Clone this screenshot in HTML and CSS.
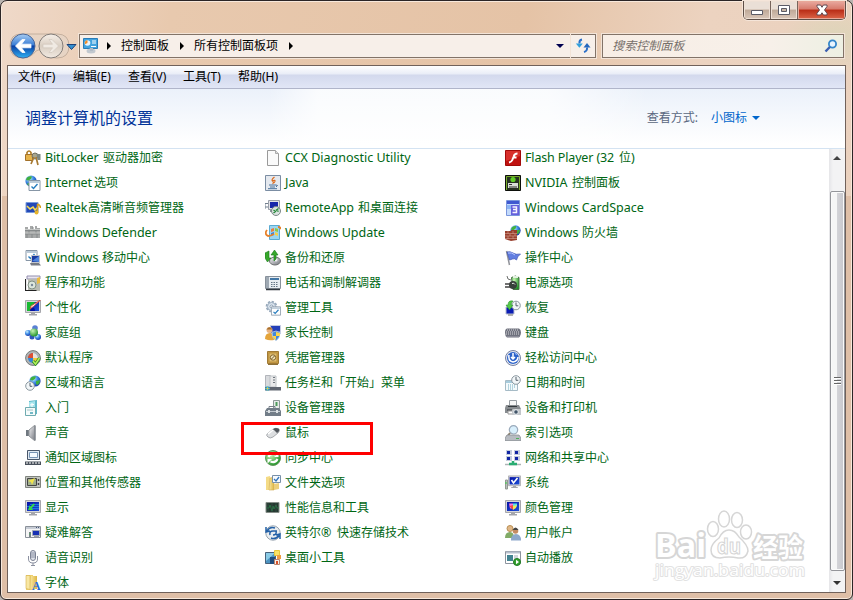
FILE: index.html
```
<!DOCTYPE html>
<html lang="zh-CN">
<head>
	<meta charset="utf-8">
	<meta name="viewport" content="width=device-width, initial-scale=1.0">
	<title>所有控制面板项</title>
	<link rel="stylesheet" href="styles.css">
</head>
<body>
<svg class="defs" width="0" height="0">
	<defs>
		<linearGradient id="blue" x1="0" y1="0" x2="0" y2="1"><stop offset="0" stop-color="#a9cdf2"/><stop offset=".45" stop-color="#3c7fd6"/><stop offset=".5" stop-color="#0a3fa4"/><stop offset="1" stop-color="#2fb2f4"/></linearGradient>
		<linearGradient id="pale" x1="0" y1="0" x2="0" y2="1"><stop offset="0" stop-color="#f6efe8"/><stop offset=".5" stop-color="#d9cec2"/><stop offset="1" stop-color="#f1e9e1"/></linearGradient>
		<linearGradient id="metal" x1="0" y1="0" x2="1" y2="1"><stop offset="0" stop-color="#f4f4f6"/><stop offset="1" stop-color="#74777f"/></linearGradient>
		<linearGradient id="folder" x1="0" y1="0" x2="1" y2="0"><stop offset="0" stop-color="#fbe9a2"/><stop offset="1" stop-color="#dcb544"/></linearGradient>
		<linearGradient id="screen" x1="0" y1="0" x2="1" y2="1"><stop offset="0" stop-color="#0510a4"/><stop offset="1" stop-color="#1c50d8"/></linearGradient>
		<radialGradient id="globe" cx=".35" cy=".3" r=".75"><stop offset="0" stop-color="#c9f1ff"/><stop offset=".5" stop-color="#3e8be5"/><stop offset="1" stop-color="#1434a4"/></radialGradient>
		<radialGradient id="green" cx=".35" cy=".3" r=".75"><stop offset="0" stop-color="#c8f5b4"/><stop offset="1" stop-color="#1d9125"/></radialGradient>
		<symbol id="monitor" viewBox="0 0 16 16"><path d="M.5 .5h15v12H.5z" fill="#d6d6da" stroke="#a6a7ac"/><path d="M2 2h12v9H2z" fill="url(#screen)"/><path d="M6 13h4v1h2v1.500H4V14h2z" fill="#a4a5ab"/></symbol>
		<symbol id="clock" viewBox="0 0 10 10"><circle cx="5" cy="5" r="4.300" fill="#f2f6f8" stroke="#8a979f"/><path d="M5 2v3.300h2.300" fill="none" stroke="#54616b"/></symbol>
		<symbol id="page" viewBox="0 0 12 11"><path d="M.5.5h11v10H.5z" fill="#fff" stroke="#8796a6"/><path d="M1 2h10" stroke="#bccbd8" stroke-width="2"/><path d="M3 6.500l2 2 4-4.500" fill="none" stroke="#277dbe" stroke-width="1.400"/></symbol>
		<symbol id="earth" viewBox="0 0 12 12"><circle cx="6" cy="6" r="5.600" fill="url(#globe)"/><path d="M2 2.600Q5 .5 7 1.400L6 4 3.600 5.600 1 5zM7 6l4-1q.3 3-2.400 5L7 9zM3 8l2 1-1 2-2-2z" fill="#41b13d"/></symbol>
	</defs>
</svg>
<div class="window">
	<div class="caption">
		<div class="buttons">
			<span class="btn min"><svg width="14" height="14"><path d="M1.500 7.500h11v4h-11z" fill="#fff" stroke="#5b5b66"/></svg></span>
			<span class="btn max"><svg width="14" height="14"><path d="M1.500 2.500h11v9h-11z" fill="#fff" stroke="#5b5b66"/><path d="M4.500 5.500h5v3h-5z" fill="#c9b6a5" stroke="#5b5b66"/></svg></span>
			<span class="btn close"><svg width="14" height="14"><path d="M2 2h3.600L7 4.300 8.400 2H12v1.500L9.500 7l2.500 3.300V12H8.400L7 9.800 5.600 12H2v-1.700L4.500 7 2 3.500z" fill="#fff" stroke="#604b53"/></svg></span>
		</div>
	</div>
	<div class="navbar">
		<svg class="travel" width="70" height="28">
			<path d="M13 2h36q12 0 12 12t-12 12q-8 0-13-7-4-3-8 0-5 7-13 7Q2 26 2 14T13 2z" fill="#e7d4c4" stroke="#c5b09e"/>
			<circle cx="15" cy="14" r="12" fill="url(#blue)" stroke="#4b6798"/>
			<path d="M7.500 14l6.500-6.500h3L13.500 12.200H23v3.600h-9.500l3.500 4.700h-3z" fill="#fff" stroke="#fff" stroke-width=".8"/>
			<circle cx="43" cy="14" r="12" fill="url(#pale)" stroke="#827c78"/>
			<path d="M50.500 14L44 7.500h-3l3.500 4.700H35v3.600h9.500L41 20.500h3z" fill="#f0eae3" stroke="#cfc5ba" stroke-width=".6"/>
			<path d="M59 12.500h9l-4.500 5z" fill="#348fd0" stroke="#1d4179"/>
		</svg>
		<div class="address">
			<svg class="cpl" width="17" height="17"><path d="M1.500 1.500h14v10h-14z" fill="#43a3de" stroke="#297bb7"/><circle cx="5.500" cy="6" r="2.800" fill="#e7f5ff"/><path d="M5.500 6V3.200A2.800 2.800 0 0 0 3 7.200z" fill="#f18b27"/><path d="M10 4h4M10 6h4M9 9.500h5" stroke="#fff"/><ellipse cx="9" cy="14" rx="4.500" ry="2.500" fill="#c1c8cf"/><path d="M8 11h3v3H8z" fill="#b1bbc5"/></svg>
			<i class="right"></i><span>控制面板</span><i class="right"></i><span>所有控制面板项</span><i class="right"></i>
			<i class="down"></i>
		</div>
		<div class="refresh">
			<svg width="16" height="16"><path d="M7 1.500Q4 2 4.500 5.500M12 9.500Q12.500 13 9 14" fill="none" stroke="#2b70c9" stroke-width="2"/><path d="M.8 5.500h7L4.400 9.800z" fill="#32a0dc"/><path d="M8.500 9.500h7L12 5z" fill="#2567bd"/></svg>
		</div>
		<div class="search">
			<span>搜索控制面板</span>
			<svg width="14" height="14"><circle cx="8.500" cy="5" r="3.600" fill="#e8f5ff" stroke="#3386ca" stroke-width="1.800"/><path d="M5.800 8L1.500 12.500" stroke="#3b5fb0" stroke-width="2.400"/></svg>
		</div>
	</div>
	<div class="client">
		<div class="menu"><span>文件(F)</span><span>编辑(E)</span><span>查看(V)</span><span>工具(T)</span><span>帮助(H)</span></div>
		<div class="header">
			<h1>调整计算机的设置</h1>
			<div class="view">查看方式: <a>小图标</a><i></i></div>
		</div>
		<div class="body">
			<div class="items">
				<a><svg viewBox="0 0 16 16"><path d="M2 4V2.500Q4-.5 6 2.500V6" fill="none" stroke="#ad7c26" stroke-width="1.600"/><path d="M.5 4.500h7v6h-7z" fill="#e6b34a" stroke="#a2712a"/><circle cx="10" cy="6" r="3" fill="#a8a68e" stroke="#716f60"/><path d="M9 7l-3 7M11 7l2 8" stroke="#a77b34" stroke-width="1.700"/><path d="M11.500 4h4v6h-3z" fill="#7c8680"/></svg><span class="en w58">BitLocker </span>驱动器加密</a>
				<a><svg viewBox="0 0 16 16"><path d="M2.500.5h8l3 3v12h-11z" fill="#fafafa" stroke="#9a9a9a"/><path d="M10.500.5v3h3" fill="#ddd" stroke="#aaa"/></svg><span class="en">CCX Diagnostic Utility</span></a>
				<a><svg viewBox="0 0 16 16"><path d="M.5.5h15v15H.5z" fill="#c01210" stroke="#a20a09"/><path d="M1 1h14v5L1 11z" fill="#d8302c"/><path d="M12.500 3.500q-3 0-3.800 3L7.300 10Q6.500 12 4 12.500M8 7.500h3.500" fill="none" stroke="#fff" stroke-width="2"/></svg><span class="en w94">Flash Player (32 </span>位<span class="en">)</span></a>

				<a><svg viewBox="0 0 16 16"><use href="#earth" width="12" height="12"/><use href="#page" x="3" y="5" width="13" height="11"/></svg><span class="en w49">Internet </span>选项</a>
				<a><svg viewBox="0 0 16 16"><path d="M.5.5h15v15H.5z" fill="#e5e9ef" stroke="#7b8da3"/><path d="M9.500 2q-4 3-1.500 4.500Q9 8 7.500 9M7 6q5-2 2 2" fill="none" stroke="#dc6c1f" stroke-width="1.200"/><path d="M4 10h7M5 12h5M3 13.700h9M11 10q3 0 0 2" fill="none" stroke="#48709a"/></svg><span class="en">Java</span></a>
				<a><svg viewBox="0 0 16 16"><path d="M.5.5h15v15H.5z" fill="#263221" stroke="#0c0f0a"/><path d="M1.500 15V1.500H14.500V15" fill="none" stroke="#76a92b"/><circle cx="8" cy="4.500" r="2.600" fill="#60ce25"/><path d="M3 8h10v5H3z" fill="#d9dfd6"/><path d="M4 9.500h3M4 12h8" stroke="#333"/></svg><span class="en w47">NVIDIA </span>控制面板</a>

				<a><svg viewBox="0 0 16 16"><path d="M1 2.500h12v10H1z" fill="#2349b7" stroke="#7a9cdd"/><path d="M2 6l3 3 3-2 2 3 3-3" fill="none" stroke="#f7db58" stroke-width="1.600"/><path d="M12.500 4v8M12.500 4q3 1 3 4" stroke="#d69e1c" stroke-width="1.500" fill="none"/><circle cx="11.500" cy="12.500" r="2" fill="#e7b52c"/></svg><span class="en w43">Realtek</span>高清晰音频管理器</a>
				<a><svg viewBox="0 0 16 16"><path d="M0 3.500h5M0 3v6M0 7h4" stroke="#73808f"/><path d="M3.500.5h11v9h-11z" fill="#e3e3e8" stroke="#999fa9"/><path d="M5 2h8v6H5z" fill="#1726aa"/><path d="M5 10h4v2H5z" fill="#8b929b"/><circle cx="11" cy="11" r="4.500" fill="#dbe3e1" stroke="#7c8788"/><path d="M8.500 10l2 1.500-2 1.500M13.500 8.500l-2 1.500 2 1.500" fill="none" stroke="#228736" stroke-width="1.300"/></svg><span class="en w73">RemoteApp </span>和桌面连接</a>
				<a><svg viewBox="0 0 16 16"><path d="M1.500.5h13v15h-13z" fill="#c3dafb" stroke="#7a96dc"/><path d="M2 1h12v3H2z" fill="#3f58d0"/><path d="M2 5h5v4H2z" fill="#8db5f4"/><path d="M6 5h8v10H6z" fill="#6560dc"/><path d="M7.500 7h4v2.500H8M11.500 9.500v3h-4" fill="none" stroke="#f5f4ff" stroke-width="1.500"/></svg><span class="en">Windows CardSpace</span></a>

				<a><svg viewBox="0 0 16 16"><path d="M0 2h3v2h2V1h3v3h2V1h2v2h3v10H0z" fill="#a6a8a8"/><path d="M0 5.500h15M0 9h15M4 5v4M8 2v4M11 6v3M2 9v4M7 9v4M12 9v4" stroke="#85898a"/><path d="M0 4.500h15M0 8h15" stroke="#d6d7d6" stroke-width=".7"/></svg><span class="en">Windows Defender</span></a>
				<a><svg viewBox="0 0 16 16"><path d="M4.500.5h10v14h-10z" fill="#9bd6f2" stroke="#5cabd2"/><path d="M6 4l3-1v3L6 7z" fill="#ec7d3b"/><path d="M10 3l3 1v3l-3-1z" fill="#8cc84b"/><path d="M6 8l3-1v3l-3 1z" fill="#3e81dc"/><path d="M10 7l3 1v3l-3-1z" fill="#f4d24c"/><path d="M13 2q3 0 2 2M2 5Q-1 9 3 11q3 0 6-2" fill="none" stroke="#e7822b" stroke-width="1.800"/></svg><span class="en">Windows Update</span></a>
				<a><svg viewBox="0 0 16 16"><use href="#earth" x="5" y="0" width="11" height="11"/><path d="M0 6h6v-1h6v10l-6 1-6-2z" fill="#99402e"/><path d="M0 8.500h12M0 11h12M0 13.500h12M3 6v3M8 6v3M5 9v2M10 9v2M3 11v3M8 11v3" stroke="#cf9484" stroke-width=".7"/></svg><span class="en w57">Windows </span>防火墙</a>

				<a><svg viewBox="0 0 16 16"><use href="#page" width="13" height="11"/><path d="M6.500 5.500h8v7h-8z" fill="#193a9f" stroke="#c2c5cb"/><path d="M7 11l7-5v6z" fill="#4d83dd"/><path d="M5 13h9l2 2.500H6z" fill="#777b84"/></svg><span class="en w57">Windows </span>移动中心</a>
				<a><svg viewBox="0 0 16 16"><ellipse cx="10" cy="11" rx="5.500" ry="4" fill="url(#metal)" stroke="#6c6e70"/><circle cx="11" cy="10" r="1.500" fill="#eee"/><path d="M4 1v7h2l-3.500 4L0 8V3zM9 11V5H6l3.500-5L13 5h-2v4z" fill="#38a82c" stroke="#15771a" stroke-width=".6"/></svg>备份和还原</a>
				<a><svg viewBox="0 0 16 16"><path d="M1.500 1l3 14" stroke="#909299" stroke-width="1.500"/><path d="M2 2q3-1 6 1t7.500 1q-3 2-4 6-2-2-4-1l-3 1z" fill="#617ee1" stroke="#3b52b4" stroke-width=".7"/><path d="M3 3q4-1 7 2" stroke="#b4c4ff" fill="none"/></svg>操作中心</a>

				<a><svg viewBox="0 0 16 16"><path d="M2 1h13v3H2z" fill="#e8e6f0" stroke="#938eae"/><path d="M3 4h12v12H3z" fill="#b9bbb2"/><path d="M.5 4v11.500h11" fill="none" stroke="#222" stroke-width="1.200"/><circle cx="7" cy="10" r="4" fill="#dce6dd" stroke="#829185"/><circle cx="7" cy="10" r="1.200" fill="#789"/><path d="M12 3l3-1v6l-3 1z" fill="#e9bb42"/></svg>程序和功能</a>
				<a><svg viewBox="0 0 16 16"><path d="M.5 1.500h15v12H.5z" fill="#e8edf1" stroke="#88919b"/><path d="M1 2h3v11H1z" fill="#9fa9b3"/><path d="M5 3h9v2H5z" fill="#4277a6"/><path d="M6 7.500h7M6 9.500h7M6 11.500h7" stroke="#647483" stroke-dasharray="1.500 1"/><path d="M1 14.500h14" stroke="#31373e" stroke-width="1.500"/></svg>电话和调制解调器</a>
				<a><svg viewBox="0 0 16 16"><path d="M6.500 2.500q4-3 7.500 0v12H8z" fill="url(#green)" stroke="#477244"/><path d="M8 2h5" stroke="#e5f2e2" stroke-width="2"/><path d="M2 1q0 4 4 4" fill="none" stroke="#6f726f"/><circle cx="8" cy="10" r="4" fill="#37403a"/><path d="M0 9h5M0 12h5" stroke="#444" stroke-width="1.300"/><path d="M7 8.500q2-1 3 1" stroke="#e8eee7" fill="none"/></svg>电源选项</a>

				<a><svg viewBox="0 0 16 16"><use href="#monitor" width="16" height="16"/><path d="M2 2h8L6 11H2z" fill="#17b832"/><path d="M6 7q4 0 4 4H5z" fill="#0510a4"/><path d="M15.500 0L9 6 5 9l1-3z" fill="#fff" stroke="#e33d2c" stroke-width=".8"/></svg>个性化</a>
				<a><svg viewBox="0 0 16 16"><circle cx="6.500" cy="6.500" r="4.800" fill="#dce5ee" stroke="#97a8ba" stroke-width="2" stroke-dasharray="2.200 1.500"/><circle cx="6.500" cy="6.500" r="4" fill="#dce5ee" stroke="#9fb0c2"/><circle cx="6.500" cy="6.500" r="1.500" fill="#fff" stroke="#8ba0b5"/><use href="#page" x="6" y="6" width="10" height="10"/></svg>管理工具</a>
				<a><svg viewBox="0 0 16 16"><path d="M1 7h8v7H1z" fill="#0a1cb4" stroke="#b9bfcf"/><path d="M3 15h5" stroke="#999" stroke-width="1.500"/><use href="#clock" x="6" y="0" width="10" height="11"/><path d="M8 1Q3 0 3 5H1l3.500 5L8 5H6q0-2 2-4z" fill="#54c849" stroke="#238924" stroke-width=".5"/></svg>恢复</a>

				<a><svg viewBox="0 0 16 16"><circle cx="10" cy="3" r="2.800" fill="#5a80d4"/><circle cx="3" cy="8" r="3" fill="url(#globe)"/><circle cx="13" cy="12" r="3" fill="url(#globe)"/><circle cx="7" cy="12" r="2.500" fill="#3256b9"/><circle cx="9" cy="7.500" r="4" fill="url(#green)"/></svg>家庭组</a>
				<a><svg viewBox="0 0 16 16"><path d="M5.500.5h10v8h-10z" fill="#2440b8" stroke="#c5cce0"/><circle cx="4.500" cy="5" r="3" fill="#e7b483"/><path d="M1.500 4.500Q4.500 0 7.500 4.500z" fill="#a56f2e"/><path d="M0 14q0-6 5-6 4 0 4 7-5 1-9-1z" fill="#e4a43b"/><path d="M11 6q2 1 4 1 1 5-4 9-5-4-4-9 2 0 4-1z" fill="#4488d8" stroke="#dae3ec" stroke-width=".7"/><path d="M11 7v4h4q0-2-.3-3zM11 11v4q-3-2-3.500-4z" fill="#ffd54a"/></svg>家长控制</a>
				<a><svg viewBox="0 0 16 16"><path d="M2 3.500h12q2 1 2 4T14 12.500H2Q0 11 0 7.500T2 3.500z" fill="#70737f"/><path d="M2 5h12M1 7h14M1 9h14" stroke="#d7d8dc" stroke-width="1.200" stroke-dasharray="1 1"/><path d="M1 11.500h14" stroke="#8a8b98" fill="none"/></svg>键盘</a>

				<a><svg viewBox="0 0 16 16"><circle cx="8" cy="8" r="7.400" fill="#b1b5b5" stroke="#777b7c"/><circle cx="8" cy="8" r="5" fill="#3487d5"/><path d="M8 3A5 5 0 0 0 3 8H8z" fill="#df4f32"/><path d="M8 3A5 5 0 0 1 13 8H8z" fill="#e9e4dc"/><path d="M8 8h5A5 5 0 0 1 8 13z" fill="#f2c53d"/><path d="M8 11l2.500 3L14.500 8" fill="none" stroke="#2c8d24" stroke-width="3"/><path d="M8 11l2.500 3L14.500 8" fill="none" stroke="#b4f15b" stroke-width="1.500"/></svg>默认程序</a>
				<a><svg viewBox="0 0 16 16"><path d="M2.500 1.500h11v12h-11z" fill="#c89b45" stroke="#a07a36"/><path d="M4 3h8v9H4z" fill="#e1be71" stroke="#b78f3f"/><circle cx="8" cy="7.500" r="2.700" fill="#f2e5bd" stroke="#80632c"/><path d="M6.500 9L9.500 6" stroke="#705521"/><path d="M3 14.500h10" stroke="#8d7038"/></svg>凭据管理器</a>
				<a><svg viewBox="0 0 16 16"><circle cx="8" cy="8" r="7.500" fill="#e4e7f0" stroke="#7581a2"/><circle cx="8" cy="8" r="6" fill="#2c63ca"/><path d="M4 5q-1 6 4 7 5-1 5-5M8 3v6M6 7l2 2 2-2" fill="none" stroke="#fff" stroke-width="1.500"/><path d="M10 3.500l2 1" stroke="#a5c3ff"/></svg>轻松访问中心</a>

				<a><svg viewBox="0 0 16 16"><use href="#earth" x="4" width="12" height="12"/><use href="#clock" y="6" width="10" height="10"/></svg>区域和语言</a>
				<a><svg viewBox="0 0 16 16"><path d="M.5.5h5v12h-5z" fill="#d8dadd" stroke="#b2b5bb"/><path d="M5 1h6v11H5z" fill="#e9e9ea" stroke="#bcc1c5"/><path d="M8 2.500h2M8 5h2M8 7.500h2" stroke="#6f767e"/><path d="M0 12h16v3.500H0z" fill="#606671"/><circle cx="2.500" cy="13.500" r="2.300" fill="#26a0d4"/><path d="M2.500 11.500v4M.5 13.500h4" stroke="#e7ce50" stroke-width=".7"/></svg>任务栏和「开始」菜单</a>
				<a><svg viewBox="0 0 16 16"><path d="M.5 5.500h12v10H.5z" fill="#f4fafc" stroke="#a6bbc6"/><path d="M1 6h11v2H1z" fill="#a6cbdc"/><path d="M3 10h8M3 12h8M3 14h6" stroke="#71acc0" stroke-dasharray="1 1"/><use href="#clock" x="6" width="10" height="10"/></svg>日期和时间</a>

				<a><svg viewBox="0 0 16 16"><path d="M4 1l8-1v14l-8 1z" fill="#62b9ca"/><path d="M4 2l6-1v12l-6 1z" fill="#a5e4ec"/><path d="M5 5l4-.500M7 3v5" stroke="#fff"/><path d="M.5 7.500h10v8H.5z" fill="#f5fbfb" stroke="#6fabb0"/><path d="M2 10h6" stroke="#a4c4c6"/><path d="M5 13h3" stroke="#46a4b6" stroke-width="1.500"/></svg>入门</a>
				<a><svg viewBox="0 0 16 16"><path d="M8.500.5h6v10h-6z" fill="#e7ebe9" stroke="#8d9897"/><path d="M10.500 2h2v4h-2z" fill="#4c9a5b"/><path d="M4 9V6.500h6V9" fill="none" stroke="#777f88"/><path d="M2 8h12l2 3v5H0v-5z" fill="#727d88"/><path d="M1 11.500h14" stroke="#c2c9cf"/><path d="M3 10h2v3H3zM11 10h2v3h-2z" fill="#dce1e4"/></svg>设备管理器</a>
				<a><svg viewBox="0 0 16 16"><path d="M4.500.5h7v6h-7z" fill="#f7f7f7" stroke="#999fa4"/><path d="M1 5h13l2 4v4H0V8z" fill="#888c90"/><path d="M3 6.500h9M2 10h5" stroke="#343a3e"/><path d="M3 11h5v3H3z" fill="#fff" stroke="#999"/><path d="M8 9h8v6H7v-5z" fill="#c2c6ca"/><circle cx="11" cy="12" r="2.300" fill="#415468" stroke="#ebeff2"/></svg>设备和打印机</a>

				<a><svg viewBox="0 0 16 16"><path d="M1 5h4v6H1z" fill="#707880"/><path d="M4 5l6-5v16l-6-5z" fill="url(#metal)" stroke="#94989d"/><path d="M10 1v14" stroke="#747b82"/></svg>声音</a>
				<a><svg viewBox="0 0 16 16"><path d="M2 9l5-4q4-3 7-1 1 2-1 4l-5 4q-3 2-5 0-2-1-1-3z" fill="#dddfe1" stroke="#95999d" stroke-width=".8"/><path d="M8 4q3-2 6 0 1 2-2 4z" fill="#52575d"/><path d="M3 9l5-4" stroke="#fff" stroke-width="1.600"/></svg>鼠标</a>
				<a><svg viewBox="0 0 16 16"><circle cx="8.500" cy="4.800" r="4.200" fill="#d8effc" stroke="#9aaabb" stroke-width="1.200"/><path d="M5 8l-3 4" stroke="#8b806f" stroke-width="2"/><path d="M2 10h12l2 3v2.500H0V13z" fill="#b7bbc1" stroke="#81868d" stroke-width=".7"/><path d="M11 13.500h3" stroke="#4db25a"/></svg>索引选项</a>

				<a><svg viewBox="0 0 16 16"><path d="M2.500.5h12v9h-12z" fill="#e0e9f2" stroke="#49576a"/><path d="M4.500 2.500h8v5h-8z" fill="#f5faff" stroke="#7794b4"/><path d="M0 11.500h16v3.500H0z" fill="#48505b"/><path d="M1 13h14" stroke="#fff" stroke-dasharray="2 1"/></svg>通知区域图标</a>
				<a><svg viewBox="0 0 16 16"><circle cx="8" cy="8" r="7.500" fill="url(#green)" stroke="#60985c"/><path d="M3.500 7q2-4.500 7-2.500M12.500 9q-2 4.500-7 2.500" fill="none" stroke="#fff" stroke-width="2"/><path d="M9 7h4.500V2.500zM7 9H2.500v4.500z" fill="#fff"/></svg>同步中心</a>
				<a><svg viewBox="0 0 16 16"><path d="M1 0h6v5H1zM9 0h6v5H9zM1 6h6v5H1zM9 6h6v5H9z" fill="#c4cedd"/><path d="M2 1h3v3H2zM10 1h3v3h-3zM2 7h3v3H2zM10 7h3v3h-3z" fill="#1226a4"/><path d="M0 14.500h16" stroke="#acb5b5" stroke-width="1.500"/><path d="M8 11v3M4 14h8" stroke="#29ac72" stroke-width="2.500"/></svg>网络和共享中心</a>

				<a><svg viewBox="0 0 16 16"><path d="M.5 1.500h15v11H.5z" fill="#c1c4bf" stroke="#81857f"/><path d="M2.500 3.500h9v7h-9z" fill="#a2b08c" stroke="#444"/><path d="M3 6l7-3-3 7-1-3z" fill="#f3e54a"/><path d="M13.500 4v2M13.500 8v2" stroke="#444" stroke-width="1.500"/></svg>位置和其他传感器</a>
				<a><svg viewBox="0 0 16 16"><path d="M1 2l4-1v14H1z" fill="#f4db86"/><path d="M5 3l4-1v13H4z" fill="url(#folder)" stroke="#d0ac55" stroke-width=".6"/><path d="M9 9l5-1v6l-5 1z" fill="#eccf7c"/><path d="M7.500.5h8v7h-8z" fill="#f8fbff" stroke="#7890a8"/><path d="M9 4l2 2 3-4" fill="none" stroke="#3476bc" stroke-width="1.300"/></svg>文件夹选项</a>
				<a><svg viewBox="0 0 16 16"><path d="M.5 5h2v9h-2z" fill="#b9c0ba" stroke="#929893"/><path d="M1 7v2" stroke="#38d345"/><use href="#monitor" x="3" y="0" width="13" height="14"/><path d="M6.500 5l2 3 4-5" fill="none" stroke="#fff" stroke-width="1.600"/></svg>系统</a>

				<a><svg viewBox="0 0 16 16"><use href="#monitor" width="16" height="16"/><path d="M2 6.500h12M5 4.500h9M4 8.500h10" stroke="#1e8be7" stroke-width=".8"/><path d="M8.500 3.500L5 7V4.500L3 10h5.500L6.500 8.500l3.500-4z" fill="#35da45"/></svg>显示</a>
				<a><svg viewBox="0 0 16 16"><path d="M1 2.500h13v10H1z" fill="#253931" stroke="#868e89"/><path d="M1 8h3l1-3 2 6 1-5 1 3 2-4 1 3h2" fill="none" stroke="#2a7c46" stroke-width=".8"/><path d="M3 3v9M7 3v9M11 3v9" stroke="#36564a" stroke-width=".6"/></svg>性能信息和工具</a>
				<a><svg viewBox="0 0 16 16"><use href="#monitor" width="16" height="16"/><path d="M4 3.500h4v5H5z" fill="#ff70df"/><path d="M8 3.500h4v3H8z" fill="#59e5e6"/><path d="M4.500 6L8 5v5z" fill="#ef4c42"/><path d="M8 6l4-1-1 3-3 2z" fill="#f2e758"/></svg>颜色管理</a>

				<a><svg viewBox="0 0 16 16"><path d="M.5 1.500h15v11H.5z" fill="#f5f5f5" stroke="#8a9099"/><path d="M1 3h14" stroke="#c8cdd6" stroke-width="2"/><path d="M11 2.500h1M13 2.500h1" stroke="#475879"/><path d="M7.500 5.500h7v5h-7z" fill="#1730b3" stroke="#a2a8b7"/><path d="M4 7h2v5H4z" fill="#798187"/><path d="M4.500 9h1" stroke="#33da43"/><path d="M9 11.500h5" stroke="#999ea8"/></svg>疑难解答</a>
				<a><svg viewBox="0 0 16 16"><circle cx="8" cy="8" r="7.200" fill="#e9edf0" stroke="#97a3ae"/><path d="M2 6q3-5 8-3M5 6l-4 1V2M14 10q-3 5-8 3M11 10l4-1v5M5 10q-1-4 3-4h4M11 6q1 4-3 4" fill="none" stroke="#2461a7" stroke-width="1.500"/></svg>英特尔<span class="en w16">®</span>快速存储技术</a>
				<a><svg viewBox="0 0 16 16"><circle cx="5" cy="3.500" r="3" fill="#e0b888" stroke="#b98f55"/><path d="M0 13q0-6 5-6 4 0 4 6z" fill="#82ab67"/><circle cx="10.500" cy="6" r="2.800" fill="#c58b62"/><path d="M7.500 5q3-5 6 0z" fill="#444"/><path d="M6 15.500q0-6.500 5-6.500 5 0 5 6.500z" fill="#8da8cb"/></svg>用户帐户</a>

				<a><svg viewBox="0 0 16 16"><rect x="5.500" y=".5" width="5" height="10" rx="2.500" fill="#dfe2ea" stroke="#7c8294"/><path d="M6 3h4M6 5h4M6 7h4" stroke="#868da0"/><path d="M3.500 6v3q0 4 4.500 4t4.500-4V6M8 13v2.500M6 15.500h4" fill="none" stroke="#8b90a0"/></svg>语音识别</a>
				<a><svg viewBox="0 0 16 16"><path d="M.5 2.500h10v11H.5z" fill="#4c93c1" stroke="#47627b"/><path d="M1 3h9L1 11z" fill="#8acbe6"/><path d="M5 7h5v7H5z" fill="#1e4c7c"/><path d="M9.500.5h5v5h-5z" fill="#f8e368" stroke="#e8c93a"/><path d="M12 5h4v4h-4z" fill="#ef9c41"/><path d="M9.500 9.500h5v5h-5z" fill="#f5eee9" stroke="#b8846f"/><path d="M11 11h2v3h-2z" fill="#d9522a"/></svg>桌面小工具</a>
				<a><svg viewBox="0 0 16 16"><path d="M.5 1.500h15v12H.5z" fill="#fff" stroke="#8d949e"/><path d="M1 2.500h14" stroke="#b9c1ce" stroke-width="2"/><path d="M2 5h6v6H2z" fill="#438391"/><path d="M9 6h4M9 8h4" stroke="#a3acb8"/><circle cx="12" cy="12" r="3.500" fill="#34a02d" stroke="#1f7c22"/><path d="M11 9.700l3 2.300-3 2.300z" fill="#fff"/></svg>自动播放</a>

				<a><svg viewBox="0 0 16 16"><path d="M1 0h7v15H1z" fill="#eed06e"/><path d="M6 1h6v13H5z" fill="url(#folder)"/><path d="M1 .5h4v14l-4-1z" fill="#f8e7a3" stroke="#d3ae4c" stroke-width=".6"/><text x="7" y="15" font-size="12" font-weight="bold" font-family="Liberation Serif, serif" fill="#246bd1">A</text></svg>字体</a>
			</div>
			<div class="scrollbar">
				<i class="up"></i>
				<div class="thumb"><i></i></div>
				<i class="down"></i>
			</div>
		</div>
	</div>
	<div class="mark"></div>
	<svg class="watermark" width="160" height="76">
		<g fill="#fff" stroke="#d6d6d6" stroke-width="4" stroke-linejoin="round" paint-order="stroke">
			<text x="3" y="49" font-size="32" font-weight="bold" textLength="51" lengthAdjust="spacingAndGlyphs">Bai</text>
			<text x="101" y="49" font-size="26" font-weight="bold" textLength="50" lengthAdjust="spacingAndGlyphs">经验</text>
			<text x="3" y="68" font-size="17" stroke-width="2" stroke="#e2e2e2" textLength="150" lengthAdjust="spacingAndGlyphs">jingyan.baidu.com</text>
		</g>
		<g fill="#fff" stroke="#d6d6d6" stroke-width="1.500">
			<ellipse cx="61" cy="21" rx="5.500" ry="7.500"/><ellipse cx="72" cy="11" rx="5.500" ry="8"/><ellipse cx="85" cy="12" rx="5.500" ry="7.500"/><ellipse cx="94" cy="24" rx="5.500" ry="7"/>
			<path d="M77 22q6 0 10 7 9 8 9 14-2 8-10 7-9-2-18 0-9 0-9-8 0-6 8-12 4-8 10-8z"/>
			<text x="65" y="46" font-size="21" font-weight="bold" stroke-width="1.200" textLength="24" lengthAdjust="spacingAndGlyphs">du</text>
		</g>
	</svg>
</div>
</body>
</html>
```

FILE: styles.css
```
* {
	box-sizing: border-box;
}
body {
	margin: 0;
	width: 853px;
	height: 600px;
	overflow: hidden;
	background: #b9b4b0;
	font: 12px/16px "Noto Sans", "Noto Sans CJK SC", sans-serif;
	color: #000;
}
i {
	display: block;
	flex: none;
}
.defs {
	position: absolute;
}
.window {
	position: relative;
	display: flex;
	flex-direction: column;
	width: 853px;
	height: 600px;
	padding: 0 6px 6px;
	border: 1px solid #2b2526;
	border-radius: 7px 7px 6px 6px;
	box-shadow: inset 0 0 0 1px #f8e9dc;
	background:
		radial-gradient(ellipse 55px 35px at 835px 38px, #dcd5b9, transparent),
		linear-gradient(100deg, #efd9c9 0, #e8c9ae 170px, #e5c3a6 520px, #ecd3c0 700px, #ead1be 100%) 0 0 / 100% 195px no-repeat,
		#dfbfa7;
}

/* caption buttons */
.caption {
	display: flex;
	justify-content: flex-end;
	height: 31px;
}
.buttons {
	display: flex;
	width: 103px;
	height: 19px;
	border: 1px solid #5f4f47;
	border-top: 0;
	border-radius: 0 0 5px 5px;
	overflow: hidden;
	box-shadow: 0 0 0 1px #f5e5d9;
}
.btn {
	display: flex;
	align-items: center;
	justify-content: center;
	width: 27px;
	border-right: 1px solid #77655c;
	background: linear-gradient(#eadfd6 0 45%, #bfa998 50%, #dac7b9);
	box-shadow: inset 0 0 0 1px #eee0d5;
}
.close {
	flex: 1;
	border: 0;
	background: linear-gradient(#e9aaa0 0, #d77b6c 45%, #b92c16 50%, #dc6548);
	box-shadow: inset 0 0 0 1px #e8a898;
}

/* address bar */
.navbar {
	display: flex;
	align-items: flex-start;
	height: 33px;
	padding: 2px 2px 0 1px;
}
.travel {
	flex: none;
	margin-top: -2px;
}
.address, .refresh, .search {
	display: flex;
	align-items: center;
	height: 24px;
	border: 1px solid #827368;
	box-shadow: 0 0 0 1px #f3e4d8;
	background: #f7efe9;
}
.address {
	width: 493px;
	margin-left: 1px;
	padding: 0 6px 1px 2px;
}
.address .right {
	margin: 0 9px 0 11px;
	border: solid transparent;
	border-width: 4px 0 4px 4px;
	border-left-color: #000;
}
.address span + .right + span {
	margin-left: 1px;
}
.address .cpl {
	flex: none;
}
.address .cpl + .right {
	margin-left: 8px;
	margin-right: 10px;
}
.down {
	border: solid transparent;
	border-width: 4px 4px 0;
	border-top-color: #000050;
}
.address .down {
	margin-left: auto;
}
.refresh {
	width: 25px;
	border-left: 0;
	justify-content: center;
}
.search {
	width: 242px;
	margin-left: 6px;
	padding: 0 5px 0 9px;
	justify-content: space-between;
	color: #77706b;
	font-style: italic;
	background: linear-gradient(90deg, #f8eee6, #f7f0e9 70%, #edf0e3);
}

/* client area */
.client {
	flex: 1;
	display: flex;
	flex-direction: column;
	min-height: 0;
	border: 1px solid #70615a;
	background: #fff;
}
.menu {
	display: grid;
	grid-template-columns: repeat(5, 55px);
	height: 23px;
	padding: 3px 10px;
	border-bottom: 1px solid #b0b5ca;
	background: linear-gradient(#fff, #e9edf7 8px, #d3d9ed 9px, #e1e6f6);
}
.header {
	display: flex;
	justify-content: space-between;
	align-items: center;
	height: 60px;
	padding: 0 85px 2px 17px;
	border-bottom: 1px solid #d4e3f2;
	background:
		linear-gradient(90deg, transparent 260px, #fffb 310px 540px, transparent 640px),
		linear-gradient(#ebf1fa, #fff 55px);
}
h1 {
	margin: 0;
	font-size: 16px;
	line-height: 20px;
	font-weight: normal;
	color: #039;
}
.view {
	display: flex;
	align-items: center;
	color: #5a6780;
}
.view a {
	margin: 0 5px 0 13px;
	color: #06c;
}
.view i {
	border: solid transparent;
	border-width: 4px 4px 0;
	border-top-color: #06c;
}
.body {
	display: flex;
	flex: 1;
	min-height: 0;
}
.items {
	flex: 1;
	display: grid;
	grid-template-columns: 240px 240px 240px;
	grid-auto-rows: 25px;
	align-content: start;
	margin-top: -4px;
	padding-left: 17px;
	color: #006614;
}
.items a {
	display: flex;
	align-items: center;
	white-space: pre;
}
.items svg {
	flex: none;
	width: 16px;
	height: 16px;
	margin-right: 4px;
}
.en {
	flex: none;
	font-size: 12.5px;
}
/* latin runs in front of chinese text keep fixed widths */
.w16 { width: 16px; }
.w43 { width: 43px; }
.w47 { width: 47px; }
.w49 { width: 49px; }
.w57 { width: 57px; }
.w58 { width: 58px; }
.w73 { width: 73px; }
.w94 { width: 94px; }
.w43, .w49, .w58, .w94 {
	letter-spacing: -.15px;
}

/* scrollbar */
.scrollbar {
	display: flex;
	flex-direction: column;
	align-items: center;
	width: 16px;
	padding: 7px 0;
	background: linear-gradient(90deg, #e5e5e8, #f3f3f4 4px);
}
.up {
	margin-bottom: 31px;
	border: solid transparent;
	border-width: 0 4px 4px;
	border-bottom-color: #444;
}
.scrollbar .down {
	margin-top: 10px;
	border-top-color: #333;
}
.thumb {
	flex: 1;
	display: flex;
	align-items: center;
	justify-content: center;
	width: 15px;
	border: 1px solid #94959a;
	border-radius: 2px;
	background: linear-gradient(90deg, #f6f6f6 0 45%, #d3d3d7 50%, #c7c7cc);
	box-shadow: inset 0 0 0 1px #fafafa;
}
.thumb i {
	width: 7px;
	height: 8px;
	background: repeating-linear-gradient(#666 0 1px, #fff 1px 2px, transparent 2px 3px);
}

.mark {
	position: absolute;
	left: 240px;
	top: 421px;
	width: 132px;
	height: 33px;
	border: 3px solid #f00;
}
.watermark {
	position: absolute;
	left: 651px;
	top: 507px;
	font-family: "Open Sans", "Noto Sans CJK SC", sans-serif;
}
```
